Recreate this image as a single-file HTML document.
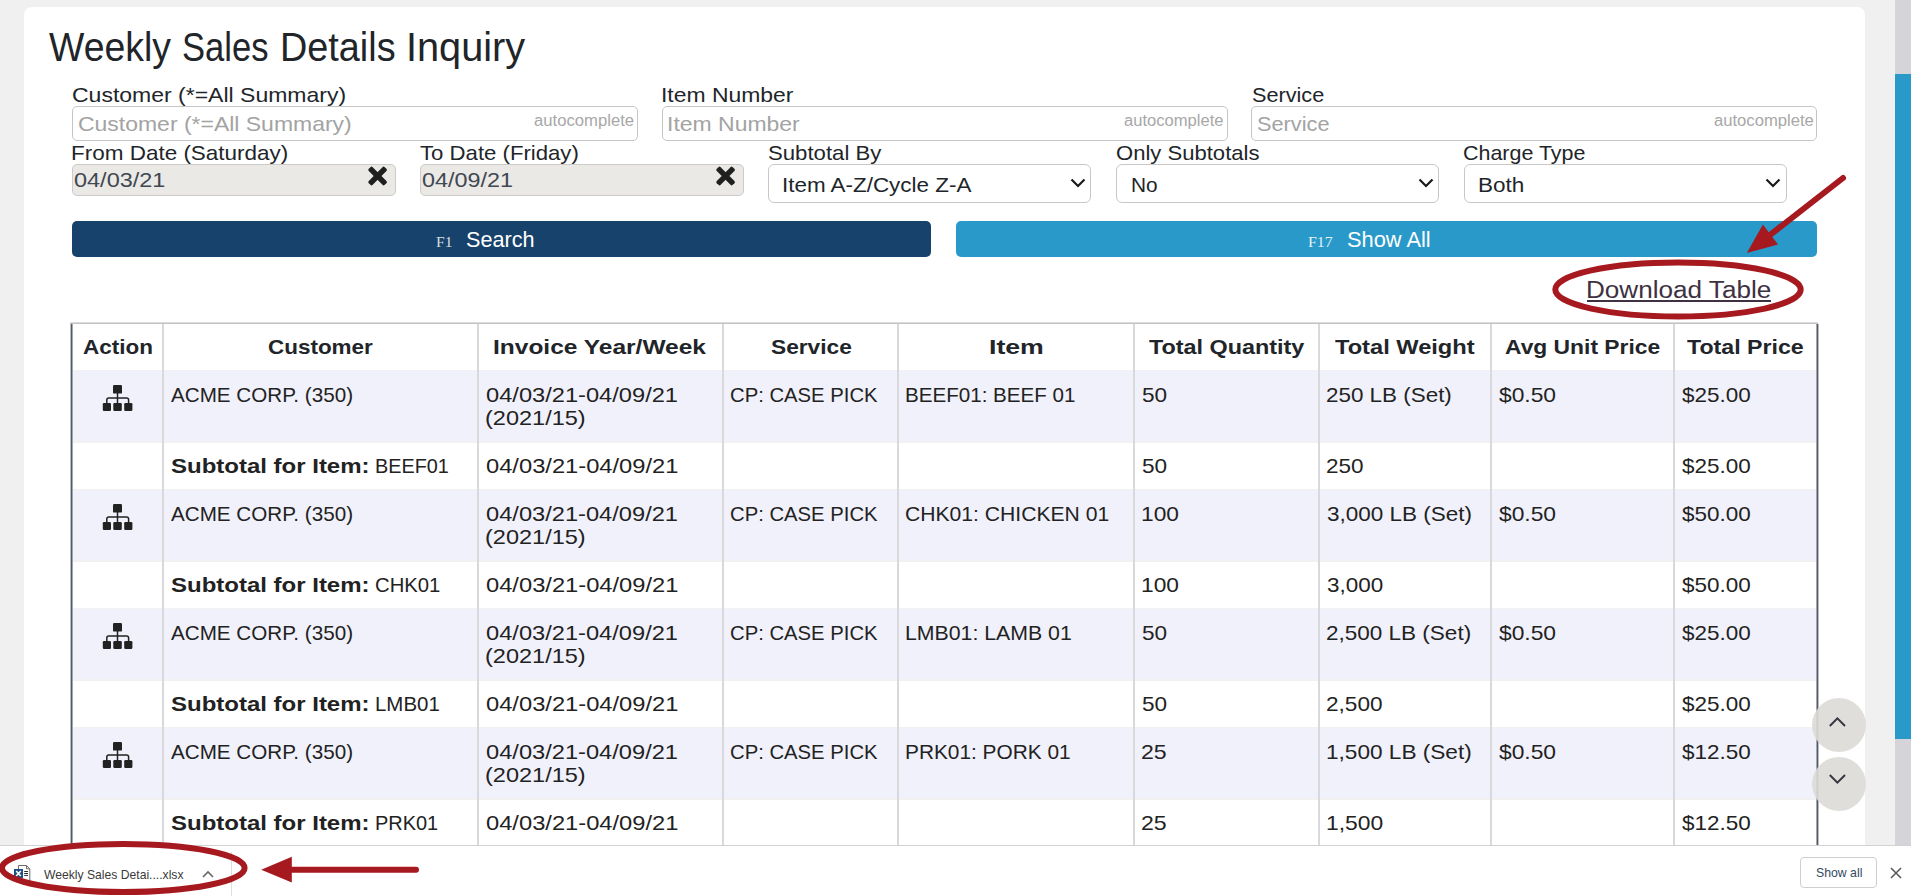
<!DOCTYPE html>
<html><head><meta charset="utf-8"><title>Weekly Sales Details Inquiry</title>
<style>
html,body{margin:0;padding:0;width:1911px;height:896px;overflow:hidden;background:#f1f0f0;font-family:"Liberation Sans",sans-serif;}
.abs{position:absolute;}
.tx{position:absolute;white-space:pre;transform-origin:0 0;font-family:"Liberation Sans",sans-serif;}
.card{left:24px;top:7px;width:1841px;height:1000px;background:#fff;border-radius:8px;}
.sbtrack{left:1895px;top:0;width:16px;height:896px;background:#d5d5d9;}
.sbthumb{left:1895px;top:74px;width:16px;height:665px;background:#2899c8;}
.inp{box-sizing:border-box;height:35px;top:106px;width:566px;border:1px solid #c6c6c6;border-radius:5px;background:#fff;}
.date{box-sizing:border-box;top:164px;height:32px;width:324px;border:1px solid #cdcbc7;border-radius:5px;background:#ebe9e5;}
.sel{box-sizing:border-box;top:164px;height:39px;width:323px;border:1px solid #c8c8c8;border-radius:6px;background:#fff;}
.btn{top:221px;height:36px;border-radius:5px;}
.rowbg{left:72px;width:1744px;height:70px;background:#f1f1fb;}
.sep{left:72px;width:1744px;height:1px;background:#f2f0f1;}
.vdiv{top:324px;width:2px;height:522px;background:#d9d8dd;}
</style></head><body>
<div class="abs card"></div>
<div class="abs sbtrack"></div>
<div class="abs sbthumb"></div>

<!-- autocomplete inputs -->
<div class="abs inp" style="left:72px;"></div>
<div class="abs inp" style="left:662px;"></div>
<div class="abs inp" style="left:1251px;"></div>
<!-- date inputs -->
<div class="abs date" style="left:72px;"></div>
<div class="abs date" style="left:420px;"></div>
<svg class="abs" style="left:367px;top:165px" width="22" height="22" viewBox="0 0 22 22"><g fill="#202020" transform="translate(10.6 11)"><rect x="-11.3" y="-2.8" width="22.6" height="5.6" rx="1.6" transform="rotate(45)"/><rect x="-11.3" y="-2.8" width="22.6" height="5.6" rx="1.6" transform="rotate(-45)"/></g></svg>
<svg class="abs" style="left:715px;top:165px" width="22" height="22" viewBox="0 0 22 22"><g fill="#202020" transform="translate(10.6 11)"><rect x="-11.3" y="-2.8" width="22.6" height="5.6" rx="1.6" transform="rotate(45)"/><rect x="-11.3" y="-2.8" width="22.6" height="5.6" rx="1.6" transform="rotate(-45)"/></g></svg>
<!-- selects -->
<div class="abs sel" style="left:768px;"></div>
<div class="abs sel" style="left:1116px;"></div>
<div class="abs sel" style="left:1464px;"></div>
<svg class="abs" style="left:1069px;top:177px" width="18" height="12" viewBox="0 0 18 12"><path d="M2.5 2.5 L9 9 L15.5 2.5" stroke="#1a1a1a" stroke-width="2.2" fill="none"/></svg>
<svg class="abs" style="left:1417px;top:177px" width="18" height="12" viewBox="0 0 18 12"><path d="M2.5 2.5 L9 9 L15.5 2.5" stroke="#1a1a1a" stroke-width="2.2" fill="none"/></svg>
<svg class="abs" style="left:1764px;top:177px" width="18" height="12" viewBox="0 0 18 12"><path d="M2.5 2.5 L9 9 L15.5 2.5" stroke="#1a1a1a" stroke-width="2.2" fill="none"/></svg>
<!-- buttons -->
<div class="abs btn" style="left:72px;width:859px;background:#17426b;"></div>
<div class="abs btn" style="left:956px;width:861px;background:#2899c8;"></div>
<!-- download link underline -->
<div class="abs" style="left:1587px;top:300px;width:184px;height:2px;background:#3d3142;"></div>

<!-- table -->
<div class="abs" style="left:70px;top:322px;width:1748px;height:600px;background:#fff;"></div>
<div class="abs rowbg" style="top:371px;"></div>
<div class="abs rowbg" style="top:490px;"></div>
<div class="abs rowbg" style="top:609px;"></div>
<div class="abs rowbg" style="top:728px;"></div>
<div class="abs sep" style="top:370px;"></div>
<div class="abs sep" style="top:441px;height:2px;"></div>
<div class="abs sep" style="top:489px;"></div>
<div class="abs sep" style="top:560px;height:2px;"></div>
<div class="abs sep" style="top:608px;"></div>
<div class="abs sep" style="top:679px;height:2px;"></div>
<div class="abs sep" style="top:727px;"></div>
<div class="abs sep" style="top:798px;height:2px;"></div>
<div class="abs vdiv" style="left:162px;"></div>
<div class="abs vdiv" style="left:477px;"></div>
<div class="abs vdiv" style="left:722px;"></div>
<div class="abs vdiv" style="left:897px;"></div>
<div class="abs vdiv" style="left:1133px;"></div>
<div class="abs vdiv" style="left:1318px;"></div>
<div class="abs vdiv" style="left:1490px;"></div>
<div class="abs vdiv" style="left:1673px;"></div>
<div class="abs" style="left:70px;top:322px;width:1748px;height:2px;background:linear-gradient(#dcdcde 0,#dcdcde 1px,#c2c2c4 1px);"></div>
<div class="abs" style="left:70px;top:324px;width:3px;height:560px;background:linear-gradient(to right,#b9bcc1 0,#b9bcc1 1px,#535a65 1px,#535a65 2px,#a3a7ad 2px);"></div>
<div class="abs" style="left:1816px;top:324px;width:3px;height:560px;background:linear-gradient(to right,#a3a7ad 0,#a3a7ad 1px,#535a65 1px,#535a65 2px,#b9bcc1 2px);"></div>
<!-- sitemap icons -->
<svg class="abs" style="left:100px;top:383px" width="36" height="30" viewBox="0 0 36 30">
 <g fill="#222">
  <rect x="13" y="2" width="9" height="8.6" rx="1.2"/>
  <rect x="2.8" y="20" width="8.2" height="8" rx="1.2"/>
  <rect x="13.3" y="20" width="8.5" height="8" rx="1.2"/>
  <rect x="24.2" y="20" width="8.2" height="8" rx="1.2"/>
 </g>
 <path d="M17.5 10 V21 M6.8 21 V17 Q6.8 15 8.8 15 H26.6 Q28.6 15 28.6 17 V21" stroke="#222" stroke-width="1.5" fill="none"/>
</svg>
<svg class="abs" style="left:100px;top:502px" width="36" height="30" viewBox="0 0 36 30">
 <g fill="#222">
  <rect x="13" y="2" width="9" height="8.6" rx="1.2"/>
  <rect x="2.8" y="20" width="8.2" height="8" rx="1.2"/>
  <rect x="13.3" y="20" width="8.5" height="8" rx="1.2"/>
  <rect x="24.2" y="20" width="8.2" height="8" rx="1.2"/>
 </g>
 <path d="M17.5 10 V21 M6.8 21 V17 Q6.8 15 8.8 15 H26.6 Q28.6 15 28.6 17 V21" stroke="#222" stroke-width="1.5" fill="none"/>
</svg>
<svg class="abs" style="left:100px;top:621px" width="36" height="30" viewBox="0 0 36 30">
 <g fill="#222">
  <rect x="13" y="2" width="9" height="8.6" rx="1.2"/>
  <rect x="2.8" y="20" width="8.2" height="8" rx="1.2"/>
  <rect x="13.3" y="20" width="8.5" height="8" rx="1.2"/>
  <rect x="24.2" y="20" width="8.2" height="8" rx="1.2"/>
 </g>
 <path d="M17.5 10 V21 M6.8 21 V17 Q6.8 15 8.8 15 H26.6 Q28.6 15 28.6 17 V21" stroke="#222" stroke-width="1.5" fill="none"/>
</svg>
<svg class="abs" style="left:100px;top:740px" width="36" height="30" viewBox="0 0 36 30">
 <g fill="#222">
  <rect x="13" y="2" width="9" height="8.6" rx="1.2"/>
  <rect x="2.8" y="20" width="8.2" height="8" rx="1.2"/>
  <rect x="13.3" y="20" width="8.5" height="8" rx="1.2"/>
  <rect x="24.2" y="20" width="8.2" height="8" rx="1.2"/>
 </g>
 <path d="M17.5 10 V21 M6.8 21 V17 Q6.8 15 8.8 15 H26.6 Q28.6 15 28.6 17 V21" stroke="#222" stroke-width="1.5" fill="none"/>
</svg>

<!-- scroll circles -->
<svg class="abs" style="left:1810px;top:696px" width="60" height="118" viewBox="0 0 60 118">
 <circle cx="29" cy="29" r="27" fill="#dcdad6" fill-opacity="0.9"/>
 <circle cx="29" cy="88" r="27" fill="#dcdad6" fill-opacity="0.9"/>
 <path d="M19.8 30 L27.4 22.4 L35 30" stroke="#3a3540" stroke-width="2" fill="none"/>
 <path d="M19.8 79 L27.4 86.6 L35 79" stroke="#3a3540" stroke-width="2" fill="none"/>
</svg>

<!-- text -->
<span class="tx" style="left:48.90px;top:26.94px;font-size:40.0px;line-height:40.0px;color:#212529;transform:scaleX(0.9355);">Weekly</span>
<span class="tx" style="left:182.24px;top:26.94px;font-size:40.0px;line-height:40.0px;color:#212529;transform:scaleX(0.8641);">Sales</span>
<span class="tx" style="left:280.08px;top:26.94px;font-size:40.0px;line-height:40.0px;color:#212529;transform:scaleX(0.9451);">Details</span>
<span class="tx" style="left:406.43px;top:26.94px;font-size:40.0px;line-height:40.0px;color:#212529;transform:scaleX(0.9918);">Inquiry</span>
<span class="tx" style="left:71.85px;top:84.98px;font-size:20.7px;line-height:20.7px;color:#212529;transform:scaleX(1.1117);">Customer (*=All Summary)</span>
<span class="tx" style="left:660.84px;top:84.98px;font-size:20.7px;line-height:20.7px;color:#212529;transform:scaleX(1.1072);">Item Number</span>
<span class="tx" style="left:1251.52px;top:84.98px;font-size:20.7px;line-height:20.7px;color:#212529;transform:scaleX(1.0470);">Service</span>
<span class="tx" style="left:77.65px;top:112.92px;font-size:21.0px;line-height:21.0px;color:#a3a3a3;transform:scaleX(1.0934);">Customer (*=All Summary)</span>
<span class="tx" style="left:666.73px;top:112.92px;font-size:21.0px;line-height:21.0px;color:#a3a3a3;transform:scaleX(1.0939);">Item Number</span>
<span class="tx" style="left:1257.32px;top:112.92px;font-size:21.0px;line-height:21.0px;color:#a3a3a3;transform:scaleX(1.0350);">Service</span>
<span class="tx" style="left:534.33px;top:113.16px;font-size:16.0px;line-height:16.0px;color:#a8a8a8;transform:scaleX(1.0415);">autocomplete</span>
<span class="tx" style="left:1124.24px;top:113.16px;font-size:16.0px;line-height:16.0px;color:#a8a8a8;transform:scaleX(1.0352);">autocomplete</span>
<span class="tx" style="left:1713.83px;top:113.16px;font-size:16.0px;line-height:16.0px;color:#a8a8a8;transform:scaleX(1.0394);">autocomplete</span>
<span class="tx" style="left:71.20px;top:142.88px;font-size:20.7px;line-height:20.7px;color:#212529;transform:scaleX(1.0862);">From Date (Saturday)</span>
<span class="tx" style="left:420.36px;top:142.88px;font-size:20.7px;line-height:20.7px;color:#212529;transform:scaleX(1.0710);">To Date (Friday)</span>
<span class="tx" style="left:767.90px;top:142.88px;font-size:20.7px;line-height:20.7px;color:#212529;transform:scaleX(1.0712);">Subtotal By</span>
<span class="tx" style="left:1116.01px;top:142.88px;font-size:20.7px;line-height:20.7px;color:#212529;transform:scaleX(1.0664);">Only Subtotals</span>
<span class="tx" style="left:1463.43px;top:142.88px;font-size:20.7px;line-height:20.7px;color:#212529;transform:scaleX(1.0366);">Charge Type</span>
<span class="tx" style="left:73.68px;top:169.76px;font-size:20.6px;line-height:20.6px;color:#404852;transform:scaleX(1.1399);">04/03/21</span>
<span class="tx" style="left:421.98px;top:169.76px;font-size:20.6px;line-height:20.6px;color:#404852;transform:scaleX(1.1335);">04/09/21</span>
<span class="tx" style="left:781.98px;top:174.82px;font-size:20.3px;line-height:20.3px;color:#212529;transform:scaleX(1.1054);">Item A-Z/Cycle Z-A</span>
<span class="tx" style="left:1130.53px;top:174.62px;font-size:20.3px;line-height:20.3px;color:#212529;transform:scaleX(1.0259);">No</span>
<span class="tx" style="left:1477.60px;top:174.62px;font-size:20.3px;line-height:20.3px;color:#212529;transform:scaleX(1.1107);">Both</span>
<span class="tx" style="left:436.41px;top:235.64px;font-size:13.8px;line-height:13.8px;color:#d8dde3;font-family:'Liberation Serif',serif;transform:scaleX(1.1267);">F1</span>
<span class="tx" style="left:466.33px;top:229.97px;font-size:21.3px;line-height:21.3px;color:#ffffff;transform:scaleX(1.0164);">Search</span>
<span class="tx" style="left:1308.40px;top:235.94px;font-size:13.8px;line-height:13.8px;color:#e6f2f8;font-family:'Liberation Serif',serif;transform:scaleX(1.1499);">F17</span>
<span class="tx" style="left:1346.82px;top:228.88px;font-size:22.0px;line-height:22.0px;color:#ffffff;transform:scaleX(0.9912);">Show All</span>
<span class="tx" style="left:1586.31px;top:279.18px;font-size:23.3px;line-height:23.3px;color:#3d3142;transform:scaleX(1.1204);">Download Table</span>
<span class="tx" style="left:82.95px;top:336.22px;font-size:21.0px;line-height:21.0px;color:#212529;font-weight:700;transform:scaleX(1.0702);">Action</span>
<span class="tx" style="left:268.10px;top:336.22px;font-size:21.0px;line-height:21.0px;color:#212529;font-weight:700;transform:scaleX(1.0694);">Customer</span>
<span class="tx" style="left:492.91px;top:336.22px;font-size:21.0px;line-height:21.0px;color:#212529;font-weight:700;transform:scaleX(1.1668);">Invoice Year/Week</span>
<span class="tx" style="left:770.53px;top:336.22px;font-size:21.0px;line-height:21.0px;color:#212529;font-weight:700;transform:scaleX(1.0809);">Service</span>
<span class="tx" style="left:988.77px;top:336.22px;font-size:21.0px;line-height:21.0px;color:#212529;font-weight:700;transform:scaleX(1.2694);">Item</span>
<span class="tx" style="left:1148.67px;top:336.22px;font-size:21.0px;line-height:21.0px;color:#212529;font-weight:700;transform:scaleX(1.1128);">Total Quantity</span>
<span class="tx" style="left:1335.46px;top:336.22px;font-size:21.0px;line-height:21.0px;color:#212529;font-weight:700;transform:scaleX(1.1256);">Total Weight</span>
<span class="tx" style="left:1505.44px;top:336.22px;font-size:21.0px;line-height:21.0px;color:#212529;font-weight:700;transform:scaleX(1.0870);">Avg Unit Price</span>
<span class="tx" style="left:1687.37px;top:336.22px;font-size:21.0px;line-height:21.0px;color:#212529;font-weight:700;transform:scaleX(1.1034);">Total Price</span>
<span class="tx" style="left:171.40px;top:383.92px;font-size:21.0px;line-height:21.0px;color:#222222;transform:scaleX(0.9829);">ACME CORP. (350)</span>
<span class="tx" style="left:485.87px;top:383.92px;font-size:21.0px;line-height:21.0px;color:#222222;transform:scaleX(1.1263);">04/03/21-04/09/21</span>
<span class="tx" style="left:485.29px;top:406.92px;font-size:21.0px;line-height:21.0px;color:#222222;transform:scaleX(1.1199);">(2021/15)</span>
<span class="tx" style="left:730.39px;top:383.92px;font-size:21.0px;line-height:21.0px;color:#222222;transform:scaleX(0.9652);">CP: CASE PICK</span>
<span class="tx" style="left:904.75px;top:383.92px;font-size:21.0px;line-height:21.0px;color:#222222;transform:scaleX(0.9803);">BEEF01: BEEF 01</span>
<span class="tx" style="left:1141.70px;top:383.92px;font-size:21.0px;line-height:21.0px;color:#222222;transform:scaleX(1.0754);">50</span>
<span class="tx" style="left:1326.28px;top:383.92px;font-size:21.0px;line-height:21.0px;color:#222222;transform:scaleX(1.0672);">250 LB (Set)</span>
<span class="tx" style="left:1498.77px;top:383.92px;font-size:21.0px;line-height:21.0px;color:#222222;transform:scaleX(1.0856);">$0.50</span>
<span class="tx" style="left:1682.08px;top:383.92px;font-size:21.0px;line-height:21.0px;color:#222222;transform:scaleX(1.0702);">$25.00</span>
<span class="tx" style="left:170.80px;top:454.52px;font-size:21.0px;line-height:21.0px;color:#222222;font-weight:700;transform:scaleX(1.1421);">Subtotal for Item:</span>
<span class="tx" style="left:374.71px;top:454.52px;font-size:21.0px;line-height:21.0px;color:#222222;transform:scaleX(0.9437);">BEEF01</span>
<span class="tx" style="left:485.67px;top:454.52px;font-size:21.0px;line-height:21.0px;color:#222222;transform:scaleX(1.1287);">04/03/21-04/09/21</span>
<span class="tx" style="left:1141.70px;top:454.52px;font-size:21.0px;line-height:21.0px;color:#222222;transform:scaleX(1.0754);">50</span>
<span class="tx" style="left:1326.28px;top:454.52px;font-size:21.0px;line-height:21.0px;color:#222222;transform:scaleX(1.0714);">250</span>
<span class="tx" style="left:1682.08px;top:454.52px;font-size:21.0px;line-height:21.0px;color:#222222;transform:scaleX(1.0702);">$25.00</span>
<span class="tx" style="left:171.40px;top:502.92px;font-size:21.0px;line-height:21.0px;color:#222222;transform:scaleX(0.9829);">ACME CORP. (350)</span>
<span class="tx" style="left:485.87px;top:502.92px;font-size:21.0px;line-height:21.0px;color:#222222;transform:scaleX(1.1263);">04/03/21-04/09/21</span>
<span class="tx" style="left:485.29px;top:525.92px;font-size:21.0px;line-height:21.0px;color:#222222;transform:scaleX(1.1199);">(2021/15)</span>
<span class="tx" style="left:730.39px;top:502.92px;font-size:21.0px;line-height:21.0px;color:#222222;transform:scaleX(0.9652);">CP: CASE PICK</span>
<span class="tx" style="left:905.34px;top:502.92px;font-size:21.0px;line-height:21.0px;color:#222222;transform:scaleX(1.0057);">CHK01: CHICKEN 01</span>
<span class="tx" style="left:1140.90px;top:502.92px;font-size:21.0px;line-height:21.0px;color:#222222;transform:scaleX(1.0825);">100</span>
<span class="tx" style="left:1326.61px;top:502.92px;font-size:21.0px;line-height:21.0px;color:#222222;transform:scaleX(1.0715);">3,000 LB (Set)</span>
<span class="tx" style="left:1498.77px;top:502.92px;font-size:21.0px;line-height:21.0px;color:#222222;transform:scaleX(1.0856);">$0.50</span>
<span class="tx" style="left:1682.08px;top:502.92px;font-size:21.0px;line-height:21.0px;color:#222222;transform:scaleX(1.0702);">$50.00</span>
<span class="tx" style="left:170.80px;top:573.52px;font-size:21.0px;line-height:21.0px;color:#222222;font-weight:700;transform:scaleX(1.1421);">Subtotal for Item:</span>
<span class="tx" style="left:375.29px;top:573.52px;font-size:21.0px;line-height:21.0px;color:#222222;transform:scaleX(0.9653);">CHK01</span>
<span class="tx" style="left:485.67px;top:573.52px;font-size:21.0px;line-height:21.0px;color:#222222;transform:scaleX(1.1287);">04/03/21-04/09/21</span>
<span class="tx" style="left:1140.90px;top:573.52px;font-size:21.0px;line-height:21.0px;color:#222222;transform:scaleX(1.0825);">100</span>
<span class="tx" style="left:1326.61px;top:573.52px;font-size:21.0px;line-height:21.0px;color:#222222;transform:scaleX(1.0694);">3,000</span>
<span class="tx" style="left:1682.08px;top:573.52px;font-size:21.0px;line-height:21.0px;color:#222222;transform:scaleX(1.0702);">$50.00</span>
<span class="tx" style="left:171.40px;top:621.92px;font-size:21.0px;line-height:21.0px;color:#222222;transform:scaleX(0.9829);">ACME CORP. (350)</span>
<span class="tx" style="left:485.87px;top:621.92px;font-size:21.0px;line-height:21.0px;color:#222222;transform:scaleX(1.1263);">04/03/21-04/09/21</span>
<span class="tx" style="left:485.29px;top:644.92px;font-size:21.0px;line-height:21.0px;color:#222222;transform:scaleX(1.1199);">(2021/15)</span>
<span class="tx" style="left:730.39px;top:621.92px;font-size:21.0px;line-height:21.0px;color:#222222;transform:scaleX(0.9652);">CP: CASE PICK</span>
<span class="tx" style="left:904.70px;top:621.92px;font-size:21.0px;line-height:21.0px;color:#222222;transform:scaleX(1.0134);">LMB01: LAMB 01</span>
<span class="tx" style="left:1141.70px;top:621.92px;font-size:21.0px;line-height:21.0px;color:#222222;transform:scaleX(1.0754);">50</span>
<span class="tx" style="left:1326.27px;top:621.92px;font-size:21.0px;line-height:21.0px;color:#222222;transform:scaleX(1.0718);">2,500 LB (Set)</span>
<span class="tx" style="left:1498.77px;top:621.92px;font-size:21.0px;line-height:21.0px;color:#222222;transform:scaleX(1.0856);">$0.50</span>
<span class="tx" style="left:1682.08px;top:621.92px;font-size:21.0px;line-height:21.0px;color:#222222;transform:scaleX(1.0702);">$25.00</span>
<span class="tx" style="left:170.80px;top:692.52px;font-size:21.0px;line-height:21.0px;color:#222222;font-weight:700;transform:scaleX(1.1421);">Subtotal for Item:</span>
<span class="tx" style="left:374.66px;top:692.52px;font-size:21.0px;line-height:21.0px;color:#222222;transform:scaleX(0.9736);">LMB01</span>
<span class="tx" style="left:485.67px;top:692.52px;font-size:21.0px;line-height:21.0px;color:#222222;transform:scaleX(1.1287);">04/03/21-04/09/21</span>
<span class="tx" style="left:1141.70px;top:692.52px;font-size:21.0px;line-height:21.0px;color:#222222;transform:scaleX(1.0754);">50</span>
<span class="tx" style="left:1326.27px;top:692.52px;font-size:21.0px;line-height:21.0px;color:#222222;transform:scaleX(1.0760);">2,500</span>
<span class="tx" style="left:1682.08px;top:692.52px;font-size:21.0px;line-height:21.0px;color:#222222;transform:scaleX(1.0702);">$25.00</span>
<span class="tx" style="left:171.40px;top:740.92px;font-size:21.0px;line-height:21.0px;color:#222222;transform:scaleX(0.9829);">ACME CORP. (350)</span>
<span class="tx" style="left:485.87px;top:740.92px;font-size:21.0px;line-height:21.0px;color:#222222;transform:scaleX(1.1263);">04/03/21-04/09/21</span>
<span class="tx" style="left:485.29px;top:763.92px;font-size:21.0px;line-height:21.0px;color:#222222;transform:scaleX(1.1199);">(2021/15)</span>
<span class="tx" style="left:730.39px;top:740.92px;font-size:21.0px;line-height:21.0px;color:#222222;transform:scaleX(0.9652);">CP: CASE PICK</span>
<span class="tx" style="left:904.73px;top:740.92px;font-size:21.0px;line-height:21.0px;color:#222222;transform:scaleX(0.9923);">PRK01: PORK 01</span>
<span class="tx" style="left:1141.44px;top:740.92px;font-size:21.0px;line-height:21.0px;color:#222222;transform:scaleX(1.1005);">25</span>
<span class="tx" style="left:1325.71px;top:740.92px;font-size:21.0px;line-height:21.0px;color:#222222;transform:scaleX(1.0760);">1,500 LB (Set)</span>
<span class="tx" style="left:1498.77px;top:740.92px;font-size:21.0px;line-height:21.0px;color:#222222;transform:scaleX(1.0856);">$0.50</span>
<span class="tx" style="left:1682.08px;top:740.92px;font-size:21.0px;line-height:21.0px;color:#222222;transform:scaleX(1.0702);">$12.50</span>
<span class="tx" style="left:170.80px;top:811.52px;font-size:21.0px;line-height:21.0px;color:#222222;font-weight:700;transform:scaleX(1.1421);">Subtotal for Item:</span>
<span class="tx" style="left:374.70px;top:811.52px;font-size:21.0px;line-height:21.0px;color:#222222;transform:scaleX(0.9501);">PRK01</span>
<span class="tx" style="left:485.67px;top:811.52px;font-size:21.0px;line-height:21.0px;color:#222222;transform:scaleX(1.1287);">04/03/21-04/09/21</span>
<span class="tx" style="left:1141.44px;top:811.52px;font-size:21.0px;line-height:21.0px;color:#222222;transform:scaleX(1.1005);">25</span>
<span class="tx" style="left:1325.69px;top:811.52px;font-size:21.0px;line-height:21.0px;color:#222222;transform:scaleX(1.0873);">1,500</span>
<span class="tx" style="left:1682.08px;top:811.52px;font-size:21.0px;line-height:21.0px;color:#222222;transform:scaleX(1.0702);">$12.50</span>

<!-- download bar -->
<div class="abs" style="left:0;top:845px;width:1911px;height:51px;background:#fff;border-top:1px solid #d2d2d2;box-sizing:border-box;"></div>
<div class="abs" style="left:231px;top:852px;width:1px;height:44px;background:#dedede;"></div>
<svg class="abs" style="left:12px;top:863px" width="20" height="20" viewBox="0 0 20 20">
 <path d="M6.5 2.5 H14.5 L17.8 5.8 V17.8 H6.5 Z" fill="#fff" stroke="#6b6b6b" stroke-width="1"/>
 <path d="M14.5 2.5 V5.8 H17.8" fill="none" stroke="#6b6b6b" stroke-width="1"/>
 <path d="M12.2 8.5 H16 M12.2 10.5 H16 M12.2 12.4 H16" stroke="#2b2b2b" stroke-width="1"/>
 <rect x="2" y="6" width="9" height="9" fill="#1e4e86"/>
 <path d="M4.2 8 L8.8 13 M8.8 8 L4.2 13" stroke="#fff" stroke-width="1.6"/>
</svg>
<svg class="abs" style="left:200px;top:867px" width="16" height="12" viewBox="0 0 16 12"><path d="M3 10 L8 5 L13 10" stroke="#666" stroke-width="1.6" fill="none"/></svg>
<div class="abs" style="left:1800px;top:857px;width:77px;height:31px;box-sizing:border-box;border:1px solid #cfcfcf;border-radius:4px;background:#fff;"></div>
<svg class="abs" style="left:1888px;top:865px" width="16" height="16" viewBox="0 0 16 16"><path d="M3 3 L13 13 M13 3 L3 13" stroke="#555" stroke-width="1.5"/></svg>
<span class="tx" style="left:43.60px;top:867.80px;font-size:13.0px;line-height:13.0px;color:#3a3a3a;transform:scaleX(0.9344);">Weekly Sales Detai....xlsx</span>
<span class="tx" style="left:1815.95px;top:865.96px;font-size:13.4px;line-height:13.4px;color:#34495e;transform:scaleX(0.9164);">Show all</span>

<!-- annotations -->
<svg class="abs" style="left:0;top:0;pointer-events:none" width="1911" height="896" viewBox="0 0 1911 896">
 <g stroke="#a6191f" fill="none" stroke-width="6">
  <ellipse cx="1678" cy="289.5" rx="122.7" ry="27"/>
  <ellipse cx="123.3" cy="868" rx="121.3" ry="24"/>
  <path d="M1843 178 L1768 236.5" stroke-linecap="round"/>
  <path d="M289 869.7 H416" stroke-linecap="round"/>
 </g>
 <g fill="#a6191f">
  <path d="M1746.8 252.9 L1762.9 224.5 L1778 244.4 Z"/>
  <path d="M261.2 869.7 L291.8 856.8 L291.8 882.6 Z"/>
 </g>
</svg>
</body></html>
